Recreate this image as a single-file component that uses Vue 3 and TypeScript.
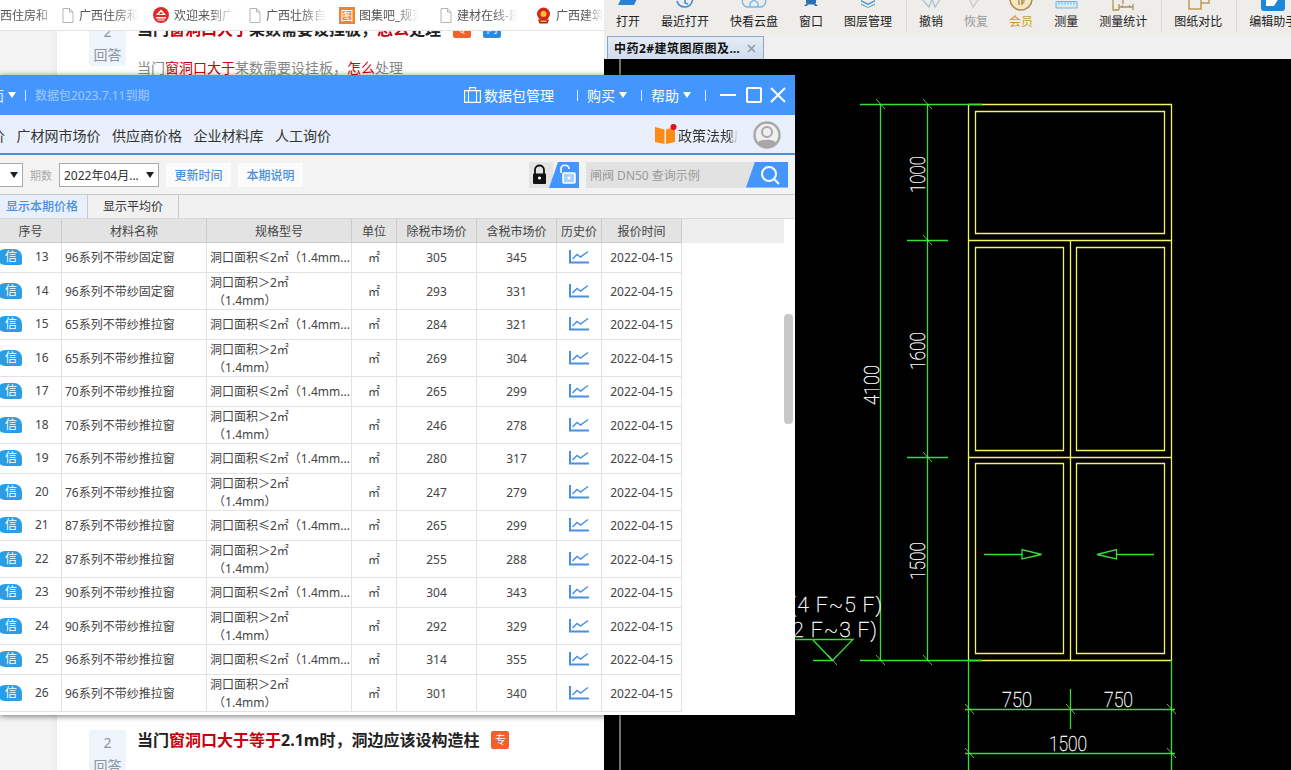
<script setup lang="ts">
type Mark = 'doc' | 'seal' | 'atlas' | 'emblem'

const bookmarks: { label: string; mark?: Mark }[] = [
  { label: '西住房和' },
  { label: '广西住房和', mark: 'doc' },
  { label: '欢迎来到广', mark: 'seal' },
  { label: '广西壮族自', mark: 'doc' },
  { label: '图集吧_规范', mark: 'atlas' },
  { label: '建材在线-建', mark: 'doc' },
  { label: '广西建筑', mark: 'emblem' },
]

const tools = [
  [
    { label: '打开', icon: 'open' },
    { label: '最近打开', icon: 'recent' },
    { label: '快看云盘', icon: 'cloud' },
    { label: '窗口', icon: 'window' },
    { label: '图层管理', icon: 'layers' },
  ],
  [
    { label: '撤销', icon: 'undo' },
    { label: '恢复', icon: 'redo', tone: 'off' },
    { label: '会员', icon: 'vip', tone: 'gold' },
    { label: '测量', icon: 'ruler' },
    { label: '测量统计', icon: 'stats' },
  ],
  [{ label: '图纸对比', icon: 'compare' }],
  [{ label: '编辑助手', icon: 'edit' }],
]

const navItems = ['广材网市场价', '供应商价格', '企业材料库', '人工询价']

const columns = ['序号', '材料名称', '规格型号', '单位', '除税市场价', '含税市场价', '历史价', '报价时间']

const series: [number, number, number, number, number][] = [
  [13, 96, 0, 305, 345],
  [14, 96, 0, 293, 331],
  [15, 65, 1, 284, 321],
  [16, 65, 1, 269, 304],
  [17, 70, 1, 265, 299],
  [18, 70, 1, 246, 278],
  [19, 76, 1, 280, 317],
  [20, 76, 1, 247, 279],
  [21, 87, 1, 265, 299],
  [22, 87, 1, 255, 288],
  [23, 90, 1, 304, 343],
  [24, 90, 1, 292, 329],
  [25, 96, 1, 314, 355],
  [26, 96, 1, 301, 340],
]

const rows = series.map(([no, type, sliding, net, gross]) => ({
  no,
  name: `${type}系列不带纱${sliding ? '推拉' : '固定'}窗`,
  large: no % 2 === 0,
  net,
  gross,
}))

const dimensions = [
  { x: 925, y: 193, len: 37, text: '1000' },
  { x: 925, y: 370, len: 38, text: '1600' },
  { x: 925, y: 580, len: 38, text: '1500' },
  { x: 879, y: 405, len: 40, text: '4100' },
]

const widths = [
  { x: 1002, y: 707, len: 30, text: '750' },
  { x: 1104, y: 707, len: 29, text: '750' },
  { x: 1049, y: 751, len: 38, text: '1500' },
]

const ticks = [
  [880, 104], [927, 104], [927, 240], [927, 457], [880, 660], [927, 660],
  [969, 709], [1070, 709], [1171, 709], [969, 753], [1171, 753], [832, 660],
]
</script>

<template>
  <div class="desktop">
    <section class="browser">
      <div class="bookmarks">
        <div v-for="b in bookmarks" :key="b.label" class="bookmark">
          <svg v-if="b.mark === 'doc'" class="mark" width="12" height="15" viewBox="0 0 12 15">
            <path d="M1 .5H7.5L11 4V14.5H1Z M7.5 .5V4H11" fill="#fff" stroke="#b5b5b5" />
          </svg>
          <svg v-else-if="b.mark === 'seal'" class="mark" width="16" height="16" viewBox="0 0 16 16">
            <circle cx="8" cy="8" r="8" fill="#e02a2a" />
            <path d="M8 2.5 13 8H3Z" fill="#fff" />
            <path d="M3 10H13V11.4H3ZM4.5 12.4H11.5V13.5H4.5Z" fill="#fff" />
            <path d="M8 4.8 10 7H6Z" fill="#e02a2a" />
          </svg>
          <span v-else-if="b.mark === 'atlas'" class="mark atlas">图</span>
          <svg v-else-if="b.mark === 'emblem'" class="mark" width="15" height="17" viewBox="0 0 15 17">
            <circle cx="7.5" cy="7" r="6.5" fill="#d8261c" />
            <circle cx="7.5" cy="7" r="3" fill="#f2c230" />
            <path d="M2 12.5H13L11.5 16.5H3.5Z" fill="#b51d16" />
            <path d="M4.5 13.5H10.5V15H4.5Z" fill="#f2c230" />
          </svg>
          <span class="bookmark-text">{{ b.label }}</span>
        </div>
      </div>

      <div class="page">
        <article class="question">
          <div class="answers"><b>2</b><span>回答</span></div>
          <div>
            <h3 class="title">当门<em>窗洞口大于</em>某数需要设挂板，<em>怎么</em>处理<i class="tag">专</i><i class="tag tag-blue">问</i></h3>
            <p class="excerpt">当门<em>窗洞口大于</em>某数需要设挂板，<em>怎么</em>处理</p>
          </div>
        </article>
        <article class="question next">
          <div class="answers"><b>2</b><span>回答</span></div>
          <h3 class="title">当门<em>窗洞口大于等于</em>2.1m时，洞边应该设构造柱<i class="tag">专</i></h3>
        </article>
      </div>
    </section>

    <section class="cad">
      <div class="toolbar">
        <template v-for="(group, g) in tools" :key="g">
          <i v-if="g > 0" class="tool-sep"></i>
          <div class="tool-group">
            <div v-for="t in group" :key="t.label" class="tool" :class="t.tone">
              <svg width="26" height="12" viewBox="0 0 26 12" class="tool-icon">
                <path v-if="t.icon === 'open'" d="M3 5H19L23 -3H7Z" fill="#2b7fd4" />
                <g v-else-if="t.icon === 'recent'" fill="none" stroke="#3f8fd8" stroke-width="1.6">
                  <path d="M5 1C6 5 9 7 13 7C17 7 20 5 21 -2" />
                  <path d="M13 -1V3L16 4" />
                </g>
                <g v-else-if="t.icon === 'cloud'" fill="none" stroke="#7db8e8" stroke-width="1.5">
                  <path d="M2 -2C0 3 3 7 7 7H19C23 7 26 3 24 -2" />
                  <path d="M9 7V3L13 0L17 3V7" />
                </g>
                <g v-else-if="t.icon === 'window'" fill="#2e6fb4">
                  <path d="M8 -2H18V3H8Z" />
                  <path d="M6 6L9 3H17L20 6H17L16 4.5H10L9 6Z" />
                </g>
                <g v-else-if="t.icon === 'layers'" fill="#3f8fd0">
                  <path d="M6 0L13 3.5L20 0V1.5L13 5L6 1.5Z" />
                  <path d="M6 3.5L13 7L20 3.5V5L13 8L6 5Z" fill="#58b0c4" />
                </g>
                <path v-else-if="t.icon === 'undo'" d="M3 -2L11 7L14 -1L17 7L23 -2" fill="none" stroke="#a9c0d4" stroke-width="1.3" />
                <path v-else-if="t.icon === 'redo'" d="M6 -2L10 7L15 0L20 -2" fill="none" stroke="#c9c9c9" stroke-width="1.3" />
                <g v-else-if="t.icon === 'vip'">
                  <circle cx="13" cy="-1" r="11" fill="#f3e7c6" stroke="#b0894a" stroke-width="1.5" />
                  <path d="M11 0V5M14 5V0H17M14 2.5H16.5" fill="none" stroke="#b0894a" stroke-width="1.4" />
                </g>
                <g v-else-if="t.icon === 'ruler'">
                  <path d="M3 1.5H24V8H3Z" fill="#d6eaf8" stroke="#78b4de" />
                  <path d="M6 2V4.5M9 2V4.5M12 2V4.5M15 2V4.5M18 2V4.5M21 2V4.5" stroke="#78b4de" />
                </g>
                <g v-else-if="t.icon === 'stats'" fill="none" stroke="#b3925c" stroke-width="1.3">
                  <path d="M3 -1V10H9M13 -1V4" />
                  <path d="M9 7H23M9 4V10M23 4V10M11 7L13 5.5M21 7L19 5.5" />
                </g>
                <g v-else-if="t.icon === 'compare'" fill="none" stroke="#c19a55" stroke-width="1.5">
                  <path d="M4 -2V9H16V-2" />
                  <path d="M16 3H24V-2" />
                </g>
                <g v-else-if="t.icon === 'edit'">
                  <rect x="1" y="-6" width="24" height="17" rx="3" fill="#1b87d6" />
                  <path d="M6 -2H19L14 6H6Z" fill="#fff" />
                </g>
              </svg>
              <span>{{ t.label }}</span>
            </div>
          </div>
        </template>
      </div>
      <div class="tabs">
        <div class="tab">
          <span class="tab-name">中药2#建筑图原图及…</span>
          <span class="tab-close">×</span>
        </div>
      </div>
      <svg class="drawing" width="687" height="711" viewBox="604 59 687 711">
        <path d="M620 59V770" stroke="#e6e6e6" fill="none" />
        <g fill="none" stroke="#f4f45c" stroke-width="1.3">
          <path d="M968.5 104.5H1171.5V660.5H968.5Z" />
          <path d="M968.5 240.5H1171.5M968.5 457.5H1171.5M1070.5 240.5V660.5" />
          <path d="M975.5 111.5H1164.5V233.5H975.5Z" />
          <path d="M975.5 247.5H1063.5V450.5H975.5Z" />
          <path d="M1076.5 247.5H1164.5V450.5H1076.5Z" />
          <path d="M975.5 463.5H1063.5V653.5H975.5Z" />
          <path d="M1076.5 463.5H1164.5V653.5H1076.5Z" />
        </g>
        <g fill="none" stroke="#35e035" stroke-width="1.3">
          <path d="M860 104.5H982M860 660.5H982" />
          <path d="M880.5 104.5V660.5M927.5 104.5V660.5" />
          <path d="M907 240.5H948M907 457.5H948" />
          <path d="M968.5 660V770M1171.5 660V770" />
          <path d="M965 709.5H1175M965 753.5H1175M1070.5 689V729" />
          <path d="M984 554.5H1022M1022 549.5V559L1041.5 554.5Z" />
          <path d="M1154 554.5H1116.5M1116.5 549.5V559L1097 554.5Z" />
          <path d="M790 639.5H853L832.5 660.5L812.5 639.5M813 660.5H832.5" />
        </g>
        <path
          v-for="(t, i) in ticks"
          :key="i"
          :d="`M${t[0] - 4} ${t[1] - 5}L${t[0] + 5} ${t[1] + 5}`"
          stroke="#8ed88e"
          stroke-width="0.8"
          fill="none"
        />
        <g class="cad-text">
          <text
            v-for="d in dimensions"
            :key="d.y"
            :transform="`translate(${d.x} ${d.y}) rotate(-90)`"
            :textLength="d.len"
            lengthAdjust="spacingAndGlyphs"
          >{{ d.text }}</text>
          <text
            v-for="w in widths"
            :key="w.x"
            :x="w.x"
            :y="w.y"
            :textLength="w.len"
            lengthAdjust="spacingAndGlyphs"
          >{{ w.text }}</text>
          <text x="790" y="612" textLength="92" lengthAdjust="spacing">(4 F~5 F)</text>
          <text x="785" y="637" textLength="92" lengthAdjust="spacing">(2 F~3 F)</text>
        </g>
      </svg>
    </section>

    <section class="window">
      <header class="win-head">
        <span class="clip-left">面</span>
        <i class="caret caret-white"></i>
        <i class="head-sep"></i>
        <span class="expiry">数据包2023.7.11到期</span>
        <div class="head-right">
          <svg width="17" height="16" viewBox="0 0 17 16" fill="none" stroke="#fff" stroke-width="1.1">
            <path d="M.6 3.6H16.4V15.4H.6ZM5.5 3.6V.6H11.5V3.6M4.5 3.6V15.4M12.5 3.6V15.4" />
          </svg>
          <span class="pack">数据包管理</span>
          <i class="head-sep wide"></i>
          <span>购买</span><i class="caret caret-white"></i>
          <i class="head-sep"></i>
          <span>帮助</span><i class="caret caret-white"></i>
          <i class="head-sep"></i>
          <svg class="win-btns" width="66" height="16" viewBox="0 0 66 16" fill="none" stroke="#fff" stroke-width="2">
            <path d="M0 8H16" />
            <rect x="27" y="1" width="14" height="14" rx="1" />
            <path d="M51 1L65 15M65 1L51 15" />
          </svg>
        </div>
      </header>

      <nav class="win-nav">
        <span class="clip-nav">价</span>
        <span v-for="n in navItems" :key="n">{{ n }}</span>
        <div class="nav-right">
          <svg class="book" width="23" height="21" viewBox="0 0 23 21">
            <path d="M1 3L10.5 5.5V20L1 18Z" fill="#ff8a16" />
            <path d="M12 5.5L21 3V18L12 20Z" fill="#ff8a16" />
            <circle cx="19.5" cy="3" r="3" fill="#e0101a" />
          </svg>
          <span class="policy">政策法规库</span>
          <svg class="avatar" width="28" height="28" viewBox="0 0 28 28">
            <circle cx="14" cy="14" r="12.5" fill="#efefef" stroke="#a8a8a8" stroke-width="2.4" />
            <circle cx="14" cy="11" r="5" fill="none" stroke="#a8a8a8" stroke-width="2" />
            <path d="M4.5 22C7 17.5 21 17.5 23.5 22C19 27.5 9 27.5 4.5 22Z" fill="#a8a8a8" />
          </svg>
        </div>
      </nav>

      <div class="filters">
        <div class="select stub"><i class="caret"></i></div>
        <span class="period">期数</span>
        <div class="select"><span>2022年04月...</span><i class="caret"></i></div>
        <button class="link-btn">更新时间</button>
        <button class="link-btn">本期说明</button>
        <svg class="locks" width="50" height="26" viewBox="0 0 50 26">
          <rect width="24" height="26" fill="#e4e4e4" />
          <path d="M20 26L29 0H50V26Z" fill="#4496ff" />
          <path d="M6 12V8C6 2 15 2 15 8V12" fill="none" stroke="#111" stroke-width="1.8" />
          <rect x="4" y="11.5" width="13" height="10.5" rx="1" fill="#111" />
          <circle cx="10.5" cy="16" r="1.6" fill="#fff" />
          <path d="M32 11V7C32 2 40 2 40 7" fill="none" stroke="#fff" stroke-width="1.6" />
          <rect x="34" y="11" width="12" height="10" rx="1" fill="#a9d0ff" stroke="#fff" stroke-width="1.6" />
          <circle cx="40" cy="16" r="1.5" fill="#fff" />
        </svg>
        <div class="search">
          <span>闸阀 DN50 查询示例</span>
          <button class="search-btn" aria-label="search">
            <svg width="20" height="20" viewBox="0 0 20 20" fill="none" stroke="#fff" stroke-width="2">
              <circle cx="9" cy="9" r="7" />
              <path d="M14 14L19 19" />
            </svg>
          </button>
        </div>
      </div>

      <div class="price-tabs">
        <span class="price-tab active">显示本期价格</span>
        <span class="price-tab">显示平均价</span>
      </div>

      <div class="table-wrap">
        <table class="grid">
          <colgroup>
            <col class="c-no" /><col class="c-name" /><col class="c-spec" /><col class="c-unit" />
            <col class="c-price" /><col class="c-price" /><col class="c-hist" /><col class="c-price" /><col />
          </colgroup>
          <thead>
            <tr>
              <th v-for="c in columns" :key="c">{{ c }}</th>
              <th class="filler"></th>
            </tr>
          </thead>
          <tbody>
            <tr v-for="r in rows" :key="r.no" :class="{ tall: r.large }">
              <td>
                <div class="no-cell"><span class="credit">信</span><span>{{ r.no }}</span></div>
              </td>
              <td class="left">{{ r.name }}</td>
              <td class="left spec">
                <div v-if="r.large" class="spec-lines">洞口面积＞2㎡<br />&nbsp;（1.4mm）</div>
                <template v-else>洞口面积≤2㎡（1.4mm...</template>
              </td>
              <td>㎡</td>
              <td>{{ r.net }}</td>
              <td>{{ r.gross }}</td>
              <td>
                <svg class="trend" width="20" height="14" viewBox="0 0 20 14" fill="none" stroke="#4a90e2">
                  <path d="M1 0V12.5H20" stroke-width="2" />
                  <path d="M3.5 9L8 4.5L11.5 7L19 1.5" stroke-width="1.5" />
                </svg>
              </td>
              <td>2022-04-15</td>
              <td class="filler"></td>
            </tr>
          </tbody>
        </table>
        <div class="scroll-thumb"></div>
      </div>
    </section>
  </div>
</template>

<style>
html,
body {
  margin: 0;
  overflow: hidden;
  background: #000;
}
</style>

<style scoped>
.desktop {
  position: relative;
  display: flex;
  width: 1291px;
  height: 770px;
  overflow: hidden;
  font-family: "Noto Sans", "Noto Sans CJK SC", sans-serif;
  font-size: 12px;
  color: #333;
}

/* browser behind the window */
.browser {
  width: 604px;
  flex: none;
  height: 770px;
  overflow: hidden;
  background: linear-gradient(90deg, #f4f4f4 0, #f4f4f4 50px, #ececec 57px);
}

.bookmarks {
  position: relative;
  z-index: 1;
  display: grid;
  grid-template-columns: 62px 91px 96px 90px 101px 96px 1fr;
  align-items: center;
  height: 31px;
  background: #fff;
  border-bottom: 1px solid #e4e4e4;
  box-sizing: border-box;
}

.bookmark {
  display: flex;
  align-items: center;
  min-width: 0;
  overflow: hidden;
}

.mark {
  flex: none;
  margin-right: 5px;
}

.atlas {
  width: 16px;
  height: 17px;
  background: #f5822a;
  color: #fff;
  font-size: 13px;
  line-height: 17px;
  text-align: center;
  margin-right: 4px;
}

.bookmark-text {
  white-space: nowrap;
  color: #555;
  font-size: 12px;
  -webkit-mask-image: linear-gradient(90deg, #000 60%, transparent 100%);
  mask-image: linear-gradient(90deg, #000 60%, transparent 100%);
  width: 60px;
  overflow: hidden;
}

.page {
  width: 547px;
  height: 760px;
  margin: -12px 0 0 57px;
  background: #fff;
  padding-left: 32px;
  box-sizing: border-box;
}

.question {
  display: flex;
  gap: 11px;
}

.question.next {
  margin-top: 652px;
}

.answers {
  display: flex;
  flex: none;
  flex-direction: column;
  align-items: center;
  width: 37px;
  height: 47px;
  padding-top: 2px;
  box-sizing: border-box;
  background: #eef4fb;
  border-radius: 2px;
  color: #8a94a6;
  font-size: 14px;
  line-height: 22px;
}

.answers b {
  font-weight: 400;
  font-size: 14px;
  height: 24px;
}

.title {
  display: flex;
  align-items: center;
  align-self: flex-start;
  margin: 0;
  font-size: 16px;
  line-height: 20px;
  font-weight: 700;
  color: #222;
  white-space: nowrap;
}

.title em,
.excerpt em {
  font-style: normal;
  color: #c7000b;
}

.tag {
  width: 18px;
  height: 18px;
  margin-left: 12px;
  background: #f0622a;
  border-radius: 2px;
  color: #fff;
  font-size: 11px;
  font-style: normal;
  font-weight: 400;
  line-height: 18px;
  text-align: center;
}

.tag-blue {
  background: #2d8ae0;
}

.excerpt {
  margin: 19px 0 0;
  font-size: 14px;
  line-height: 20px;
  color: #888;
  white-space: nowrap;
}

/* CAD viewer */
.cad {
  flex: 1;
  display: flex;
  flex-direction: column;
  min-width: 0;
  background: #000;
  overflow: hidden;
}

.toolbar {
  display: flex;
  flex: none;
  height: 35px;
  padding-left: 12px;
  background: #efedea;
  color: #222;
  white-space: nowrap;
}

.tool-group {
  display: flex;
  gap: 21px;
}

.tool-sep {
  flex: none;
  width: 1px;
  height: 32px;
  margin: 0 12px 0 14px;
  background: #ddd9d2;
}

.tool {
  display: flex;
  flex-direction: column;
  align-items: center;
  font-size: 12px;
  line-height: 16px;
}

.tool-icon {
  flex: none;
  margin: 0 -1px 2px;
  overflow: hidden;
}

.tool.off {
  color: #999;
}

.tool.gold {
  color: #c9993f;
}

.tabs {
  display: flex;
  flex: none;
  height: 24px;
  padding-left: 3px;
  background: #f0f0f0;
}

.tab {
  display: flex;
  align-items: center;
  justify-content: space-between;
  width: 157px;
  height: 23px;
  margin-top: 1px;
  padding: 0 6px 0 6px;
  box-sizing: border-box;
  border: 1px solid #8fa6c0;
  border-bottom: none;
  background: linear-gradient(#e4ecf6, #cfdcec);
  color: #111;
  font-weight: 700;
  letter-spacing: 0.5px;
  white-space: nowrap;
}

.tab-name {
  overflow: hidden;
}

.tab-close {
  color: #8a93a0;
  font-size: 18px;
  font-weight: 400;
}

.drawing {
  flex: none;
  display: block;
}

.cad-text text {
  font-family: Roboto, "Liberation Sans", sans-serif;
  font-weight: 100;
  font-size: 21px;
  fill: #fff;
  stroke: #fff;
  stroke-width: 0.35px;
}

/* floating price window */
.window {
  position: absolute;
  left: 0;
  top: 75px;
  display: flex;
  flex-direction: column;
  width: 795px;
  height: 640px;
  background: #fff;
  box-shadow: 0 1px 6px rgba(0, 0, 0, 0.55);
  overflow: hidden;
}

.win-head {
  display: flex;
  align-items: center;
  flex: none;
  height: 40px;
  background: #4496ff;
  color: #fff;
  font-size: 14px;
}

.clip-left {
  margin-left: -10px;
  color: #e8f1ff;
}

.caret {
  display: inline-block;
  width: 0;
  height: 0;
  border-left: 4.5px solid transparent;
  border-right: 4.5px solid transparent;
  border-top: 6px solid #222;
}

.caret-white {
  border-top-color: #fff;
  margin-left: 4px;
}

.head-sep {
  width: 1px;
  height: 11px;
  margin: 0 9px;
  background: #dcebff;
}

.expiry {
  font-size: 12px;
  color: rgba(255, 255, 255, 0.5);
}

.head-right {
  display: flex;
  align-items: center;
  margin-left: auto;
  padding-right: 9px;
}

.pack {
  margin-left: 3px;
}

.head-right .head-sep {
  margin-right: 9px;
  margin-left: 14px;
}

.head-right .head-sep.wide {
  margin: 0 9px 0 23px;
}

.win-btns {
  margin-left: 5px;
}

.win-nav {
  display: flex;
  align-items: center;
  gap: 11.5px;
  flex: none;
  height: 40px;
  padding-top: 1px;
  box-sizing: border-box;
  border-bottom: 2px solid #4a90d9;
  background: #e9f0fb;
  font-size: 14px;
  color: #333;
}

.clip-nav {
  margin-left: -9px;
}

.nav-right {
  display: flex;
  align-items: center;
  margin-left: auto;
  padding-right: 14px;
}

.book {
  margin-right: 1px;
}

.policy {
  width: 60px;
  overflow: hidden;
  white-space: nowrap;
  -webkit-mask-image: linear-gradient(90deg, #000 85%, transparent 100%);
  mask-image: linear-gradient(90deg, #000 85%, transparent 100%);
}

.avatar {
  margin-left: 15px;
}

.filters {
  display: flex;
  align-items: center;
  gap: 7px;
  flex: none;
  height: 39px;
  padding-right: 7px;
  box-sizing: border-box;
  background: #f3f3f3;
}

.select {
  display: flex;
  align-items: center;
  justify-content: space-between;
  width: 100px;
  height: 24px;
  padding: 0 4px 0 4px;
  box-sizing: border-box;
  border: 1px solid #aaa;
  background: #fff;
  color: #333;
  white-space: nowrap;
}

.select.stub {
  width: 34px;
  margin-left: -11px;
  justify-content: flex-end;
}

.period {
  color: #aaa;
  font-size: 11px;
}

.link-btn {
  width: 65px;
  height: 24px;
  padding: 0;
  border: none;
  background: #fbfbfb;
  color: #4a90e2;
  font: inherit;
  font-weight: 500;
}

.locks {
  margin-left: auto;
}

.search {
  display: flex;
  align-items: center;
  justify-content: space-between;
  width: 202px;
  height: 26px;
  padding-left: 4px;
  box-sizing: border-box;
  background: #e2e2e2;
  color: #999;
}

.search-btn {
  display: flex;
  align-items: center;
  justify-content: center;
  width: 42px;
  height: 26px;
  padding: 0 0 0 6px;
  border: none;
  background: #4496ff;
  clip-path: polygon(9px 0, 100% 0, 100% 100%, 0 100%);
}

.price-tabs {
  display: flex;
  flex: none;
  height: 24px;
  box-sizing: border-box;
  border-top: 1px solid #c9c9c9;
  background: #f1f1f1;
}

.price-tab {
  padding: 0 15px;
  line-height: 23px;
  border-right: 1px solid #c9c9c9;
  color: #333;
}

.price-tab.active {
  width: 88px;
  padding: 0 0 0 6px;
  box-sizing: border-box;
  background: #e9f0fb;
  color: #4a90e2;
  font-weight: 500;
  white-space: nowrap;
}

.table-wrap {
  position: relative;
  flex: 1;
  overflow: hidden;
  border-top: 1px solid #d8d8d8;
}

.grid {
  table-layout: fixed;
  width: 784px;
  border-collapse: separate;
  border-spacing: 0;
  color: #444;
}

.c-no {
  width: 62px;
}

.c-name,
.c-spec {
  width: 145px;
}

.c-unit,
.c-hist {
  width: 45px;
}

.c-price {
  width: 80px;
}

th {
  height: 24px;
  padding: 0;
  box-sizing: border-box;
  background: #e3e3e3;
  border-right: 1px solid #cbcbcb;
  border-bottom: 1px solid #cbcbcb;
  font-weight: 400;
  color: #444;
}

th.filler {
  background: #eeeeee;
  border: none;
}

td {
  height: 30px;
  padding: 0;
  box-sizing: border-box;
  border-right: 1px solid #e2e2e2;
  border-bottom: 1px solid #e2e2e2;
  text-align: center;
  line-height: 18px;
  white-space: nowrap;
}

tr.tall td {
  height: 37px;
}

tr.tall td:not(.spec) {
  padding-top: 1px;
}

td.left {
  padding-left: 3px;
  text-align: left;
  overflow: hidden;
}

.spec-lines {
  padding-top: 1px;
  margin-bottom: -1px;
}

td.filler {
  border: none;
}

.no-cell {
  display: flex;
  align-items: center;
  margin-top: -2px;
}

.credit {
  width: 25px;
  height: 16px;
  margin-left: -3px;
  margin-right: 13px;
  background: #2a9de4;
  border-radius: 8px 8px 2px 8px;
  color: #fff;
  line-height: 16px;
  text-align: center;
  padding-left: 3px;
  box-sizing: border-box;
}

.trend {
  display: block;
  margin: -1px auto 0;
}

.scroll-thumb {
  position: absolute;
  left: 784px;
  top: 95px;
  width: 9px;
  height: 110px;
  background: #c8c8c8;
  border-radius: 4px;
}
</style>
